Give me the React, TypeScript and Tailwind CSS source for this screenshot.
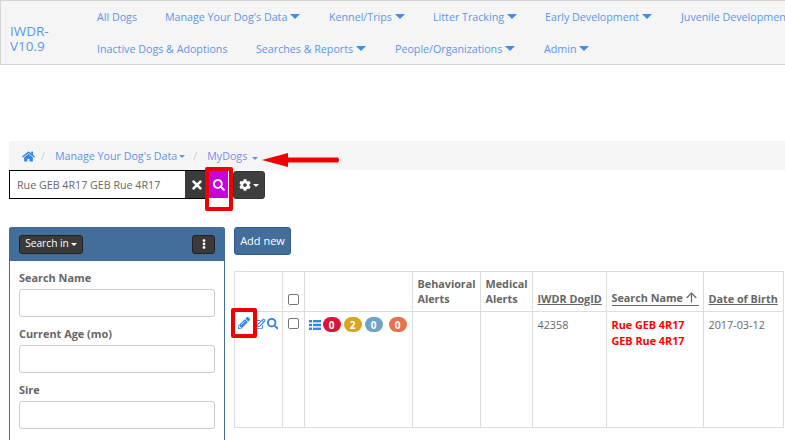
import React from 'react';
import { ArrowUp } from 'lucide-react';
import { FaHome, FaTimes, FaSearch, FaCog, FaPencilAlt, FaRegEdit, FaEllipsisV } from 'react-icons/fa';

const font = { fontFamily: '"Open Sans", sans-serif' };

function Caret({ big }: { big?: boolean }) {
  return big ? (
    <span className="ml-[3px] inline-block h-0 w-0 border-x-[5.5px] border-t-[5.5px] border-x-transparent border-t-[#3b8fe8]" />
  ) : (
    <span className="ml-[2px] inline-block h-0 w-0 border-x-[3px] border-t-[3px] border-x-transparent border-t-current" />
  );
}

function NavRow({ items }: { items: { label: string; menu?: boolean; width: number }[] }) {
  return (
    <div className="flex h-8 items-center whitespace-nowrap">
      {items.map((item) => (
        <div key={item.label} className="flex shrink-0 items-center" style={{ width: item.width }}>
          <span>{item.label}</span>
          {item.menu && <Caret big />}
        </div>
      ))}
    </div>
  );
}

function Field({ label }: { label: string }) {
  return (
    <div className="mb-[9px]">
      <div className="mb-[3px] text-[10.9px] leading-[16px] font-bold text-[#666]">{label}</div>
      <div className="h-[28px] rounded-[3px] border border-[#ccc] bg-white" />
    </div>
  );
}

function Badge({ value, color, className }: { value: string; color: string; className?: string }) {
  return (
    <span
      className={`flex h-[15px] w-[18px] items-center justify-center rounded-full text-[10px] font-bold text-white ${color} ${className ?? ''}`}
    >
      {value}
    </span>
  );
}

function ListIcon() {
  return (
    <svg width="12" height="10" viewBox="0 0 12 10" className="mr-[2px] -ml-px" fill="#2f86e8">
      <rect x="0" y="0" width="3" height="2.4" />
      <rect x="4" y="0" width="8" height="2.4" />
      <rect x="0" y="3.8" width="3" height="2.4" />
      <rect x="4" y="3.8" width="8" height="2.4" />
      <rect x="0" y="7.6" width="3" height="2.4" />
      <rect x="4" y="7.6" width="8" height="2.4" />
    </svg>
  );
}

const th = 'border border-[#ddd] pl-[4.5px] pb-[5px] align-bottom text-left text-[10.8px] leading-[15px] font-bold whitespace-nowrap text-[#666]';
const td = 'border border-[#ddd] pl-[4.5px] pt-[5px] align-top text-[10.8px] leading-[16px] text-[#666]';

export default function App() {
  return (
    <div className="relative h-[440px] w-[785px] overflow-hidden bg-white" style={font}>
      {/* Navbar */}
      <div className="flex h-[65px] border-b border-l border-t border-[#d5d5d5] bg-[#f5f5f5] text-[10.7px] text-[#5a97ea]">
        <div className="w-[96px] shrink-0 pt-[23px] pl-[9px] text-[13.5px] leading-[15px] text-[#5a97ea]">
          IWDR-
          <br />
          V10.9
        </div>
        <div className="min-w-0 flex-1 overflow-hidden">
          <NavRow
            items={[
              { label: 'All Dogs', width: 68 },
              { label: "Manage Your Dog's Data", menu: true, width: 164 },
              { label: 'Kennel/Trips', menu: true, width: 104 },
              { label: 'Litter Tracking', menu: true, width: 112 },
              { label: 'Early Development', menu: true, width: 136 },
              { label: 'Juvenile Development', width: 140 },
            ]}
          />
          <NavRow
            items={[
              { label: 'Inactive Dogs & Adoptions', width: 159 },
              { label: 'Searches & Reports', menu: true, width: 139 },
              { label: 'People/Organizations', menu: true, width: 149 },
              { label: 'Admin', menu: true, width: 60 },
            ]}
          />
        </div>
      </div>

      {/* Breadcrumb */}
      <div className="mt-[76px] ml-[9px] flex h-[29px] items-center bg-[#f5f5f5] pt-[1px] pl-[13px] text-[10.7px] text-[#5a97ea]">
        <FaHome className="text-[13px] text-[#2f86e8]" />
        <span className="mr-[10px] ml-[6px] text-[#ccc]">/</span>
        <span>Manage Your Dog's Data</span>
        <Caret />
        <span className="mr-[10px] ml-[8px] text-[#ccc]">/</span>
        <span className="text-[#7f8cf0]">MyDogs</span>
        <span className="ml-[3px] text-[#5a97ea]">
          <Caret />
        </span>
      </div>

      {/* Search bar */}
      <div className="ml-[9px] flex h-[29px] items-start">
        <div className="flex h-[29px] w-[177px] items-center border border-black bg-white pt-[1px] pl-[7px] text-[10.7px] text-[#666]">
          Rue GEB 4R17 GEB Rue 4R17
        </div>
        <div className="-ml-px flex h-[29px] w-[24px] items-center justify-center border-y border-black bg-[#3a3a3a] text-[14px] text-white">
          <FaTimes />
        </div>
        <div className="mt-px flex h-[27px] w-[19px] items-center justify-center bg-[#c800dc] text-[12px] text-white">
          <FaSearch />
        </div>
        <div className="mt-px ml-[5px] flex h-[28px] w-[32px] items-center justify-center rounded-[3px] border border-[#333] bg-[#3f3f3f] text-[12px] text-white">
          <FaCog />
          <Caret />
        </div>
      </div>

      {/* Content */}
      <div className="mt-[28px] ml-[9px] flex items-start gap-[9px]">
        <div className="h-[213px] w-[216px] shrink-0 rounded-t-[3px] border-x border-[#436d9a]">
          <div className="-mx-px flex h-[34px] items-center justify-between rounded-t-[3px] bg-[#436d9a] px-[10px]">
            <div className="flex h-[19px] w-[64px] items-center justify-center rounded-[3px] border border-[#222] bg-[#3a3a3a] text-[10.2px] text-white">
              Search in
              <Caret />
            </div>
            <div className="flex h-[19px] w-[23px] items-center justify-center rounded-[3px] border border-[#222] bg-[#3a3a3a] text-[10px] text-white">
              <FaEllipsisV />
            </div>
          </div>
          <div className="px-[9px] pt-[9px]">
            <Field label="Search Name" />
            <Field label="Current Age (mo)" />
            <Field label="Sire" />
          </div>
        </div>

        <div className="min-w-0 flex-1">
          <div className="flex h-[28px] w-[57px] items-center justify-center rounded-[3px] border border-[#2f5c8c] bg-[#436d9a] text-[11px] text-white">
            Add new
          </div>
          <table className="mt-[16px] table-fixed border-collapse" style={{ width: 550 }}>
            <colgroup>
              <col style={{ width: 48 }} />
              <col style={{ width: 22 }} />
              <col style={{ width: 108 }} />
              <col style={{ width: 68 }} />
              <col style={{ width: 52 }} />
              <col style={{ width: 74 }} />
              <col style={{ width: 97 }} />
              <col style={{ width: 80 }} />
            </colgroup>
            <thead>
              <tr className="h-[40px]">
                <th className={th}></th>
                <th className={th}>
                  <span className="mb-[1px] block h-[11px] w-[11px] rounded-[2px] border border-[#767676] bg-white" />
                </th>
                <th className={th}></th>
                <th className={th}>
                  Behavioral
                  <br />
                  Alerts
                </th>
                <th className={th}>
                  Medical
                  <br />
                  Alerts
                </th>
                <th className={th}>
                  <span className="underline">IWDR DogID</span>
                </th>
                <th className={th}>
                  <span className="flex w-[87px] items-end justify-between border-b border-[#666] leading-[14px]">
                    Search Name
                    <ArrowUp size={15} strokeWidth={2} />
                  </span>
                </th>
                <th className={th}>
                  <span className="underline">Date of Birth</span>
                </th>
              </tr>
            </thead>
            <tbody>
              <tr className="h-[116px]">
                <td className={td}>
                  <div className="flex items-center justify-end gap-[1px] pt-[1px] pr-[4px] text-[11.5px] text-[#2f86e8]">
                    <FaRegEdit />
                    <FaSearch />
                  </div>
                </td>
                <td className={td}>
                  <span className="mt-[1px] block h-[11px] w-[11px] rounded-[2px] border border-[#767676] bg-white" />
                </td>
                <td className={td}>
                  <div className="flex items-center">
                    <ListIcon />
                    <Badge value="0" color="bg-[#dc143c]" />
                    <Badge value="2" color="bg-[#daa520]" className="ml-[3px]" />
                    <Badge value="0" color="bg-[#6fa3c7]" className="ml-[3px]" />
                    <Badge value="0" color="bg-[#e8734a]" className="ml-[6px]" />
                  </div>
                </td>
                <td className={td}></td>
                <td className={td}></td>
                <td className={td}>42358</td>
                <td className={`${td} font-bold text-[#ff0000]`}>
                  Rue GEB 4R17
                  <br />
                  GEB Rue 4R17
                </td>
                <td className={td}>2017-03-12</td>
              </tr>
            </tbody>
          </table>
        </div>
      </div>

      {/* Red annotations on top of the screenshot */}
      <svg className="absolute top-[152px] left-[262px]" width="80" height="16" viewBox="0 0 80 16">
        <path d="M0 8 L26 1 L26 5.5 L76 5.5 Q78 8 76 10.5 L26 10.5 L26 15 Z" fill="#f00000" />
      </svg>
      <div className="absolute top-[167px] left-[205px] h-[44px] w-[28px] rounded-[2px] border-[4px] border-[#f00000]" />
      <div className="absolute top-[308px] left-[231px] flex h-[30px] w-[26px] items-center justify-center rounded-[2px] border-[4px] border-[#f00000] bg-white">
        <FaPencilAlt className="text-[12px] text-[#2f86e8]" />
      </div>
    </div>
  );
}
